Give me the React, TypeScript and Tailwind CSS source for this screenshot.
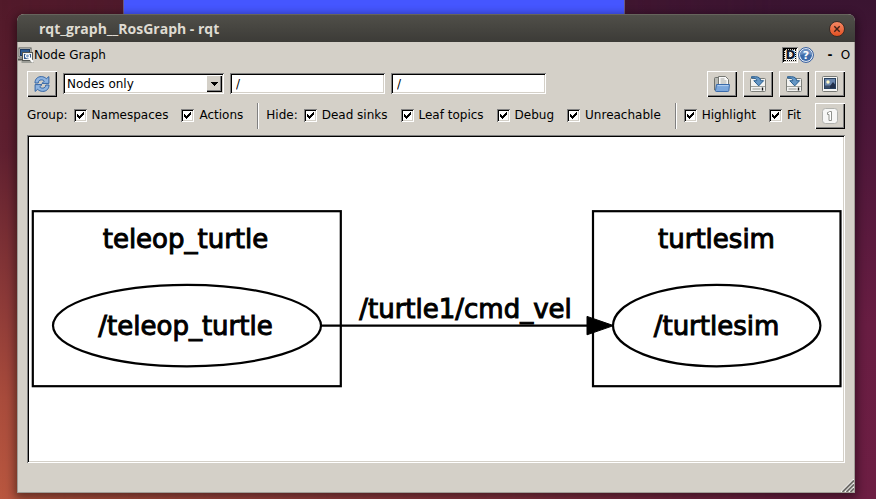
import type { ReactNode } from "react";

const SUNKEN =
  "shadow-[inset_1px_1px_#808080,inset_-1px_-1px_#ffffff,inset_2px_2px_#000000,inset_-2px_-2px_#d4d0c8]";
const RAISED =
  "shadow-[inset_1px_1px_#ffffff,inset_-1px_-1px_#000000,inset_-2px_-2px_#808080]";

function ToolButton({ label, children }: { label: string; children: ReactNode }) {
  return (
    <button
      type="button"
      aria-label={label}
      className={`flex h-[26px] w-[30px] shrink-0 items-center justify-center bg-[#d4d0c8] ${RAISED}`}
    >
      {children}
    </button>
  );
}

function Check({ label }: { label: string }) {
  return (
    <label className="flex shrink-0 items-center gap-[5px] pr-[7px] pb-px whitespace-nowrap">
      <span className="relative block size-[13px]">
        <input
          type="checkbox"
          defaultChecked
          className={`peer block size-[13px] appearance-none bg-white ${SUNKEN}`}
        />
        <svg
          viewBox="0 0 13 13"
          className="pointer-events-none invisible absolute inset-0 size-[13px] peer-checked:visible"
          shapeRendering="crispEdges"
        >
          <path d="M3 5h1v1h1v1h1v-1h1v-1h1v-1h1v-1h1v3h-1v1h-1v1h-1v1h-1v1h-1v-1h-1v-1h-1z" />
        </svg>
      </span>
      {label}
    </label>
  );
}

function Separator() {
  return (
    <div className="mx-px h-[26px] w-[2px] shrink-0 border-r border-l border-l-[#808080] border-r-white" />
  );
}

function PluginIcon() {
  return (
    <svg viewBox="0 0 16 16" className="size-4 shrink-0">
      <rect x="1" y="1" width="12" height="9" fill="#f4f4f2" stroke="#555753" />
      <rect x="2.5" y="2.5" width="9" height="6" fill="#2f5b92" stroke="#1d3a62" />
      <path d="M0 12.500h5" stroke="#555753" strokeWidth="2" />
      <rect x="4.500" y="5.500" width="10" height="8" fill="#f4f4f2" stroke="#555753" />
      <rect x="6" y="7" width="7" height="5" fill="#31588c" />
      <path d="M3.500 15h12" stroke="#8a8c87" strokeWidth="1.500" />
      <circle cx="9.500" cy="9" r="2" fill="#7f9fc6" stroke="#fff" strokeWidth="1.200" />
      <path d="M11 10.500l4 4.500" stroke="#fff" strokeWidth="2" />
    </svg>
  );
}

function HelpIcon() {
  return (
    <svg viewBox="0 0 16 16" className="size-4">
      <circle cx="8" cy="8" r="7.400" fill="#f3f6fb" stroke="#2b569a" />
      <circle cx="8" cy="8" r="6" fill="#3d6ba9" />
      <path d="M2 8a6 6 0 0 1 12 0c-3-1.500-8-1.500-12 0z" fill="#6c8fc0" />
      <text
        x="8"
        y="12"
        textAnchor="middle"
        fontSize="11"
        fontWeight="700"
        fill="#fff"
        fontFamily="DejaVu Sans, sans-serif"
      >
        ?
      </text>
    </svg>
  );
}

function RefreshIcon() {
  return (
    <svg
      viewBox="0 0 16 16"
      className="size-4"
      fill="#8fb4e0"
      stroke="#3465a4"
      strokeLinejoin="round"
    >
      <path d="M1 7C1 3 3.500.600 7.300.600c2.100 0 3.800.800 5 2.100L14.900.600V7.400H8l2.300-2.300C9.500 4.200 8.600 3.900 7.300 3.900 5.400 3.900 4.400 5 4.200 7z" />
      <path d="M15 9c0 4-2.500 6.400-6.300 6.400-2.100 0-3.800-.8-5-2.100l-2.600 2.100V8.600H8l-2.300 2.300c.8.900 1.700 1.200 3 1.200 1.900 0 2.900-1.100 3.100-3.100z" />
    </svg>
  );
}

function OpenIcon() {
  return (
    <svg viewBox="0 0 16 16" className="size-4">
      <path d="M.5 14V2.500q0-1 1-1h3.500v12.500z" fill="#b8bab5" stroke="#6f716d" />
      <path d="M4.500 9V.5h7l3 3V9z" fill="#fafafa" stroke="#777974" />
      <path d="M6.500 3h4M6.500 5h6M6.500 7h6" stroke="#a4a6a1" />
      <path
        d="M2.500 8.500h13l-.7 6.200q-.1.800-1 .8H2.200q-.7 0-.7-.8z"
        fill="#7ba7dc"
        stroke="#3a6bab"
      />
      <path d="M3.500 9.600h11" stroke="#b4d0f0" />
    </svg>
  );
}

function SaveIcon() {
  return (
    <svg viewBox="0 0 16 16" className="size-4">
      <rect x=".5" y="2.500" width="15" height="13" rx="1" fill="#f3f3f1" stroke="#7d7f7a" />
      <path d="M1 10.500h14" stroke="#9d9f9a" />
      <path d="M2.500 13h8" stroke="#b4b6b1" strokeWidth="1.500" />
      <path d="M12.500 11.500v3" stroke="#111" strokeWidth="1.400" />
      <path
        d="M1.500.7h4C8.800.700 10.600 2.300 10.600 4.700h3L8.700 9.900 3.800 4.700h3C6.800 3 5.200 2 1.500 1.900z"
        fill="#6496c4"
        stroke="#2a5f90"
        strokeLinejoin="round"
      />
    </svg>
  );
}

function ImageIcon() {
  return (
    <svg viewBox="0 0 16 16" className="size-4">
      <rect x=".5" y=".5" width="15" height="15" rx="1" fill="#f6f6f4" stroke="#777974" />
      <rect x="2.500" y="2.500" width="11" height="10" fill="#6b87ad" stroke="#28415f" />
      <path d="M3 9.500h10v2.500H3z" fill="#3a4c66" />
      <path d="M8 10l3-4 2 2.500V12H8z" fill="#22304a" />
      <circle cx="6" cy="6" r="1.700" fill="#fff7c4" />
    </svg>
  );
}

function OneIcon() {
  return (
    <svg viewBox="0 0 16 16" className="size-4">
      <rect x=".5" y=".5" width="15" height="15" rx="3" fill="#f7f7f6" stroke="#b0b1ad" />
      <path
        d="M5.500 4.500q1.500-.200 2-1h2v9h-2.500v-6h-1.500z"
        fill="#fff"
        stroke="#90928d"
        strokeLinejoin="round"
      />
    </svg>
  );
}

function NodeGraph() {
  return (
    <svg
      viewBox="0 0 814 324"
      className="block w-full font-['DejaVu_Sans',sans-serif] text-[26px]"
      role="img"
      aria-label="Node graph"
    >
      <g fill="none" stroke="#000" strokeWidth="2.200">
        <rect x="3.800" y="74.200" width="308" height="175" />
        <rect x="564" y="74.200" width="247.500" height="175" />
        <ellipse cx="158" cy="188.600" rx="134" ry="40.700" />
        <ellipse cx="687.700" cy="188.600" rx="103.700" ry="40.700" />
        <path d="M292 188.600H560" />
      </g>
      <path d="M558 179.400v18.400l26.500-9.200z" stroke="#000" />
      <g textAnchor="middle" stroke="#000">
        <text x="156.500" y="110.500">teleop_turtle</text>
        <text x="156.500" y="198">/teleop_turtle</text>
        <text x="436.500" y="180.500">/turtle1/cmd_vel</text>
        <text x="687.500" y="110.500">turtlesim</text>
        <text x="687.500" y="198">/turtlesim</text>
      </g>
    </svg>
  );
}

function SizeGrip() {
  return (
    <svg viewBox="0 0 13 13" className="size-[13px]">
      <path d="M0 13L13 0M4 13l9-9M8 13l5-5" stroke="#fff" strokeWidth="1.200" />
      <path
        d="M1.500 13L13 1.500M5.500 13L13 5.500M9.500 13L13 9.500"
        stroke="#6e6c68"
        strokeWidth="1.800"
      />
    </svg>
  );
}

export default function App() {
  return (
    <div className="relative isolate min-h-screen overflow-hidden bg-[linear-gradient(to_bottom,#521a2a_0%,#5f2030_30%,#8c3a38_60%,#a94c3c_80%,#b9573f_100%)] pt-[14px] pr-[21px] pb-[6px] pl-[17px] font-['DejaVu_Sans',sans-serif] text-[12px] leading-[16px] text-black">
      <div className="absolute inset-0 -z-10 bg-[linear-gradient(to_bottom,#3a1431_0%,#4a1638_25%,#681d42_65%,#6d1e43_100%)] [mask-image:linear-gradient(to_right,transparent,black_90%)]" />
      <div className="absolute top-0 left-[123px] -z-10 h-[20px] w-[502px] border-x border-[#6b5a80] bg-[#4556ff]" />

      <main className="overflow-hidden rounded-t-[7px] bg-[#d4d0c8] shadow-[0_3px_10px_2px_rgba(0,0,0,0.45)]">
        <header className="flex h-[28px] items-center justify-between border-t border-[#66645c] bg-linear-to-b from-[#504f49] to-[#3c3b37] pr-[10px] pl-[22px]">
          <h1 className="font-['Open_Sans','Noto_Sans',sans-serif] text-[14px] leading-[20px] font-bold text-[#dfdbd2]">
            rqt_graph__RosGraph - rqt
          </h1>
          <button
            type="button"
            aria-label="Close"
            className="flex size-4 items-center justify-center rounded-full border border-[#3a2c26] bg-linear-to-b from-[#f58763] to-[#e2501f]"
          >
            <svg viewBox="0 0 8 8" className="size-2">
              <path
                d="M1.300 1.300l5.400 5.400M6.700 1.300L1.300 6.700"
                stroke="#3f2118"
                strokeWidth="1.400"
              />
            </svg>
          </button>
        </header>

        <div className="border-r border-b border-l border-[#a09d97]">
          <div className="flex h-[26px] items-center pr-[3px]">
            <PluginIcon />
            <h2 className="flex-1">Node Graph</h2>
            <button
              type="button"
              aria-pressed="true"
              className={`size-4 bg-[repeating-conic-gradient(#ffffff_0%_25%,#d4d0c8_0%_50%)] bg-size-[2px_2px] pl-[1px] text-center leading-[16px] font-bold text-[#10182c] outline-1 -outline-offset-3 outline-dotted outline-black ${SUNKEN}`}
            >
              D
            </button>
            <button type="button" aria-label="Help">
              <HelpIcon />
            </button>
            <button type="button" className="ml-[8px] w-4 text-center font-bold">
              -
            </button>
            <button type="button" className="ml-[2px] w-[11px] text-center">
              O
            </button>
          </div>

          <div className="flex items-start gap-[6px] px-[9px] pt-[3px]">
            <ToolButton label="Refresh ROS graph">
              <RefreshIcon />
            </ToolButton>
            <div className="flex gap-[6px] pt-[2px]">
              <div className="relative w-[161px]">
                <select
                  aria-label="Graph type"
                  className={`block h-[21px] w-full appearance-none bg-white pl-1 ${SUNKEN}`}
                >
                  <option>Nodes only</option>
                </select>
                <span
                  className={`pointer-events-none absolute top-[2px] right-[2px] flex h-[17px] w-4 items-center justify-center bg-[#d4d0c8] ${RAISED}`}
                >
                  <svg viewBox="0 0 7 4" className="h-1 w-[7px]" shapeRendering="crispEdges">
                    <path d="M0 0h7v1H6v1H5v1H4v1H3V3H2V2H1V1H0z" />
                  </svg>
                </span>
              </div>
              <input
                aria-label="Namespace filter"
                defaultValue="/"
                className={`h-[21px] w-[155px] min-w-0 bg-white px-[6px] ${SUNKEN}`}
              />
              <input
                aria-label="Topic filter"
                defaultValue="/"
                className={`h-[21px] w-[155px] min-w-0 bg-white px-[6px] ${SUNKEN}`}
              />
            </div>
            <div className="ml-auto flex gap-[6px]">
              <ToolButton label="Load DOT graph">
                <OpenIcon />
              </ToolButton>
              <ToolButton label="Save as DOT graph">
                <SaveIcon />
              </ToolButton>
              <ToolButton label="Save as SVG">
                <SaveIcon />
              </ToolButton>
              <ToolButton label="Save as image">
                <ImageIcon />
              </ToolButton>
            </div>
          </div>

          <div className="flex items-center gap-[6px] px-[9px] pt-[6px] leading-[15px]">
            <span className="pb-px">Group:</span>
            <Check label="Namespaces" />
            <Check label="Actions" />
            <Separator />
            <span className="pb-px">Hide:</span>
            <Check label="Dead sinks" />
            <Check label="Leaf topics" />
            <Check label="Debug" />
            <Check label="Unreachable" />
            <Separator />
            <Check label="Highlight" />
            <Check label="Fit" />
            <div className="ml-auto">
              <ToolButton label="Zoom to original size">
                <OneIcon />
              </ToolButton>
            </div>
          </div>

          <div className="px-[9px] pt-[6px]">
            <div className={`bg-white p-[2px] ${SUNKEN}`}>
              <NodeGraph />
            </div>
          </div>

          <footer className="flex h-[29px] items-end justify-end">
            <SizeGrip />
          </footer>
        </div>
      </main>
    </div>
  );
}
